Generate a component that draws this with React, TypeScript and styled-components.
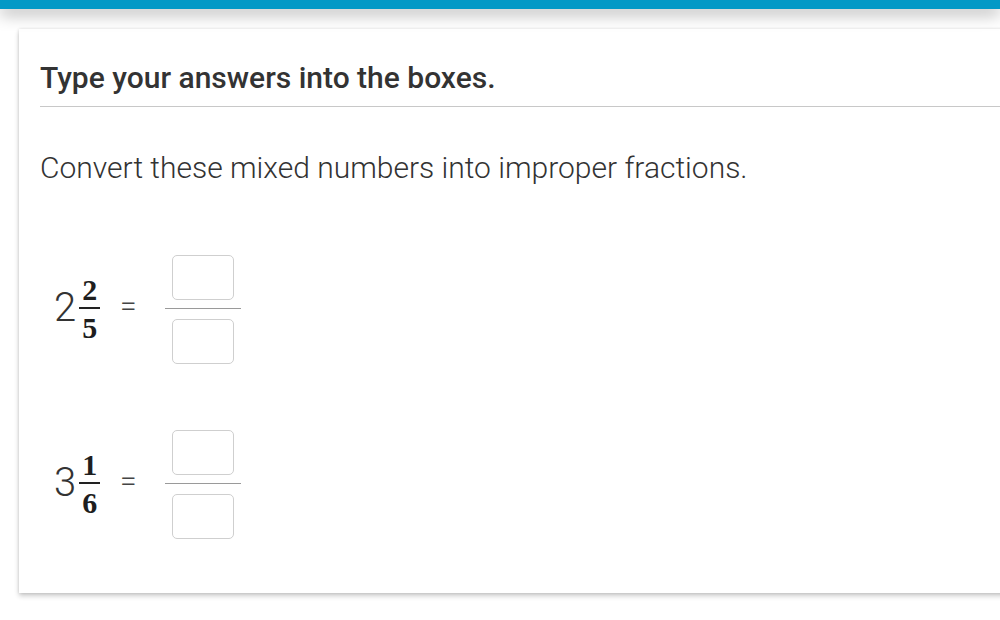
import React from "react";
import styled, { createGlobalStyle } from "styled-components";

const GlobalStyle = createGlobalStyle`
  html, body { margin: 0; padding: 0; background: #ffffff; }
  body { font-family: Roboto, "Liberation Sans", sans-serif; color: #333; }
  * { box-sizing: border-box; }
`;

const Page = styled.div`
  width: 1000px;
  height: 620px;
  overflow: hidden;
  background: #fff;
`;

const TopBar = styled.div`
  position: relative;
  z-index: 2;
  height: 9px;
  background: #0399c6;
  box-shadow: 0 5px 16px rgba(0, 0, 0, 0.34);
`;

const Main = styled.main`
  padding: 20px 0 0 19px;
`;

const Card = styled.section`
  width: 1000px;
  height: 564px;
  background: #fff;
  box-shadow: 0 3px 5px rgba(0, 0, 0, 0.2), 0 0 3px rgba(0, 0, 0, 0.12);
  padding: 32px 0 0 21px;
  display: flex;
  flex-direction: column;
`;

const Heading = styled.h2`
  margin: 0;
  font-size: 30px;
  line-height: 34px;
  font-weight: 500;
  color: #333;
  padding-bottom: 11px;
  border-bottom: 1px solid #c8c8c8;
`;

const Prompt = styled.p`
  margin: 44px 0 0 0;
  font-size: 30px;
  line-height: 34px;
  font-weight: 300;
  color: #333;
`;

const Questions = styled.div`
  display: flex;
  flex-direction: column;
  gap: 66px;
  margin-top: 70px;
`;

const Row = styled.div`
  display: flex;
  align-items: center;
  padding-left: 14px;
  height: 109px;
`;

const Mixed = styled.div`
  display: flex;
  align-items: center;
  width: 64px;
  padding-bottom: 2px;
`;

const Whole = styled.span`
  font-size: 40px;
  font-weight: 300;
  line-height: 1;
  color: #333;
  margin-right: 3px;
  padding-bottom: 2px;
`;

const Frac = styled.span`
  display: inline-flex;
  flex-direction: column;
  align-items: center;
  font-family: "Liberation Serif", "DejaVu Serif", serif;
  font-weight: bold;
  font-size: 30px;
  line-height: 1;
  color: #1e1e1e;
`;

const Num = styled.span`
  padding: 0 3px 2px;
`;

const Den = styled.span`
  padding: 4px 3px 0;
  border-top: 2px solid #222;
  width: 100%;
  text-align: center;
`;

const Equals = styled.span`
  font-size: 30px;
  font-weight: 300;
  color: #444;
  width: 47px;
  padding-left: 2px;
  padding-bottom: 7px;
  line-height: 1;
`;

const Answer = styled.div`
  display: flex;
  flex-direction: column;
  align-items: center;
  width: 76px;
`;

const Box = styled.input`
  width: 62px;
  height: 45px;
  border: 1px solid #cfcfcf;
  border-radius: 5px;
  background: #fff;
  font-size: 22px;
  text-align: center;
  outline: none;
`;

const Bar = styled.div`
  width: 100%;
  height: 1px;
  background: #9a9a9a;
  margin: 8px 0 10px;
`;

const questions = [
  { whole: 2, num: 2, den: 5 },
  { whole: 3, num: 1, den: 6 },
];

export default function App() {
  return (
    <Page>
      <GlobalStyle />
      <TopBar />
      <Main>
        <Card>
          <Heading>Type your answers into the boxes.</Heading>
          <Prompt>Convert these mixed numbers into improper fractions.</Prompt>
          <Questions>
            {questions.map((q, i) => (
              <Row key={i}>
                <Mixed>
                  <Whole>{q.whole}</Whole>
                  <Frac>
                    <Num>{q.num}</Num>
                    <Den>{q.den}</Den>
                  </Frac>
                </Mixed>
                <Equals>=</Equals>
                <Answer>
                  <Box aria-label="numerator" />
                  <Bar />
                  <Box aria-label="denominator" />
                </Answer>
              </Row>
            ))}
          </Questions>
        </Card>
      </Main>
    </Page>
  );
}
